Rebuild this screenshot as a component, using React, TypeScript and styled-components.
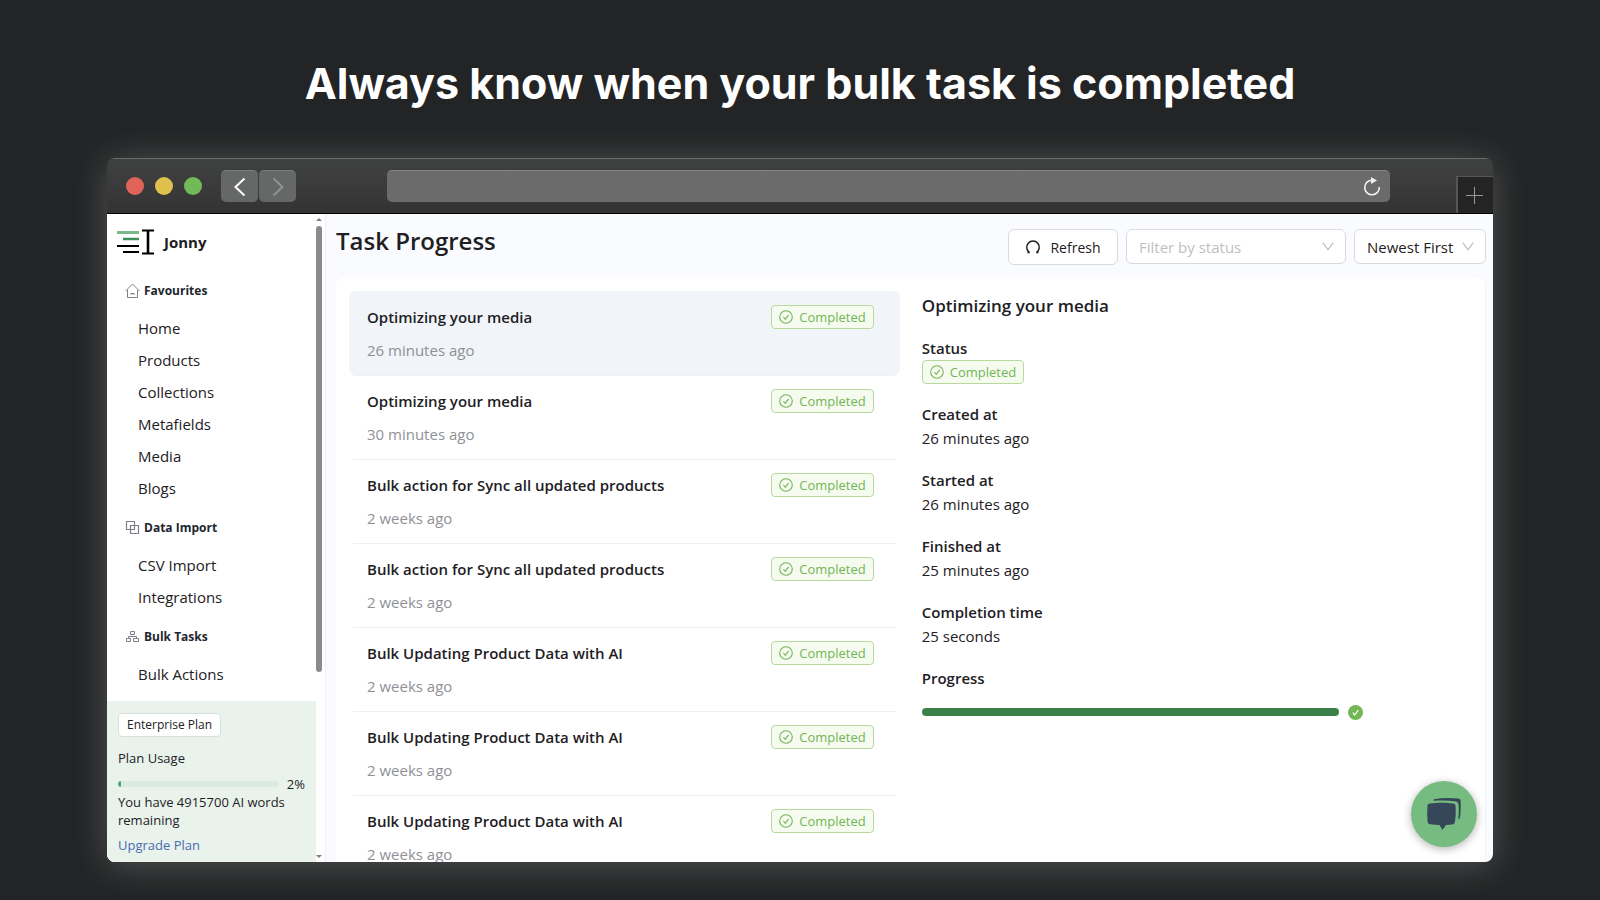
import React from "react";
import styled, { createGlobalStyle } from "styled-components";

const GlobalStyle = createGlobalStyle`
  *, *::before, *::after { box-sizing: border-box; }
  body { margin: 0; background: #232425; }
  body, button, select { font-family: "Open Sans", "Noto Sans", sans-serif; font-size: 15px; color: #1e2024; }
  h1, h2, h3, p, ul, dl, dd { margin: 0; padding: 0; }
  ul { list-style: none; }
  a { text-decoration: none; }
  button { cursor: pointer; }
`;

const Page = styled.div`
  display: flex;
  flex-direction: column;
  height: 100vh;
  padding: 0 107px 38px;
  background: #232425;
`;

const Headline = styled.h1`
  flex: none;
  height: 158px;
  padding-top: 57px;
  font-family: Inter, sans-serif;
  font-size: 43px;
  font-weight: 700;
  line-height: 52px;
  text-align: center;
  white-space: nowrap;
  color: #fff;
`;

const Browser = styled.div`
  position: relative;
  flex: 1;
  min-height: 0;
  display: flex;
  flex-direction: column;
  border-radius: 8px;
  overflow: hidden;
  box-shadow: 0 3px 36px 0 rgba(255, 255, 255, 0.22);
`;

const Chrome = styled.header`
  flex: none;
  display: flex;
  align-items: center;
  height: 56px;
  padding-left: 19px;
  background: linear-gradient(#404241, #333333);
  border-top: 1px solid #6a6c6b;
  border-bottom: 1px solid #000;
`;

const Lights = styled.div`
  display: flex;
  gap: 11px;
`;

const Light = styled.span<{ $color: string }>`
  width: 18px;
  height: 18px;
  border-radius: 50%;
  background: ${(p) => p.$color};
`;

const NavButtons = styled.div`
  display: flex;
  gap: 1px;
  margin-left: 19px;
`;

const NavButton = styled.button`
  display: grid;
  place-items: center;
  width: 37px;
  height: 32px;
  padding: 0;
  border: 0;
  border-top: 1px solid #7b7d7c;
  border-radius: 5px;
  background: #666867;
`;

const AddressBar = styled.div`
  flex: 1;
  display: flex;
  align-items: center;
  justify-content: flex-end;
  height: 32px;
  margin: 0 66px 0 91px;
  padding-right: 9px;
  border-top: 1px solid #828282;
  border-radius: 5px;
  background: #6b6b6b;
`;

const BareButton = styled.button`
  display: grid;
  place-items: center;
  padding: 0;
  border: 0;
  background: none;
`;

const NewTab = styled.button`
  align-self: flex-end;
  display: grid;
  place-items: center;
  width: 37px;
  height: 37px;
  padding: 0 2px 0 0;
  border: 0;
  border-left: 2px solid #565656;
  border-top: 1px solid #565656;
  background: #242424;
`;

const Content = styled.div`
  flex: 1;
  min-height: 0;
  display: flex;
  background: #fafbfe;
`;

const Sidebar = styled.aside`
  flex: none;
  display: flex;
  width: 219px;
  background: #fff;
  border-right: 1px solid #eef0f3;
`;

const SidebarColumn = styled.div`
  flex: 1;
  display: flex;
  flex-direction: column;
`;

const Scrollbar = styled.div`
  display: flex;
  flex-direction: column;
  align-items: center;
  justify-content: space-between;
  width: 9px;
  padding: 4px 3px 4px 0;
`;

const Thumb = styled.div`
  width: 6px;
  height: 446px;
  margin-top: 5px;
  margin-bottom: auto;
  border-radius: 3px;
  background: #8b8b8b;
`;

const Brand = styled.div`
  display: flex;
  align-items: center;
  gap: 10px;
  height: 56px;
  padding-left: 10px;
  font-weight: 700;
`;

const Nav = styled.nav`
  flex: 1;
  min-height: 0;
  overflow: hidden;
`;

const GroupTitle = styled.h3`
  display: flex;
  align-items: center;
  gap: 4px;
  height: 40px;
  padding-left: 18px;
  font-size: 12px;
  font-weight: 700;
  color: #22262e;
`;

const Item = styled.a`
  display: block;
  height: 32px;
  padding-left: 31px;
  line-height: 32px;
  color: #1e2024;
`;

const ItemList = styled.ul`
  padding: 2px 0 3px;
`;

const Plan = styled.section`
  flex: none;
  display: flex;
  flex-direction: column;
  align-items: flex-start;
  height: 161px;
  padding: 12px 11px 0;
  background: #e9f3ec;
  font-size: 13px;
  line-height: 18px;
`;

const PlanTag = styled.span`
  padding: 1px 8px;
  border: 1px solid #d9dfdb;
  border-radius: 4px;
  background: #fff;
  font-size: 12px;
  line-height: 20px;
`;

const PlanLabel = styled.p`
  margin: 12px 0 8px;
`;

const Usage = styled.div`
  display: flex;
  align-items: center;
  gap: 8px;
  width: 100%;
`;

const UsageTrack = styled.div`
  flex: 1;
  height: 6px;
  border-radius: 3px;
  background: #dcebe1;
  overflow: hidden;
`;

const UsageFill = styled.div`
  width: 2%;
  height: 100%;
  background: #55a873;
`;

const UpgradeLink = styled.a`
  margin-top: 7px;
  color: #4a6cb0;
`;

const Main = styled.main`
  flex: 1;
  min-width: 0;
  display: flex;
  flex-direction: column;
  padding: 0 7px 0 10px;
`;

const TopRow = styled.div`
  flex: none;
  display: flex;
  justify-content: space-between;
  height: 63px;
`;

const PageTitle = styled.h2`
  padding-top: 11px;
  font-size: 24px;
  font-weight: 600;
  line-height: 32px;
`;

const Controls = styled.div`
  display: flex;
  gap: 8px;
  padding-top: 15px;
`;

const RefreshButton = styled.button`
  display: flex;
  align-items: center;
  justify-content: center;
  gap: 9px;
  width: 110px;
  height: 36px;
  border: 1px solid #d9dadd;
  border-radius: 6px;
  background: #fff;
  font-size: 14px;
`;

const SelectWrap = styled.div<{ $width: number }>`
  display: grid;
  align-items: center;
  width: ${(p) => p.$width}px;
  height: 35px;

  > * { grid-area: 1 / 1; }
  > svg { justify-self: end; margin-right: 12px; pointer-events: none; }
`;

const Select = styled.select<{ $muted?: boolean }>`
  appearance: none;
  width: 100%;
  height: 100%;
  padding: 0 12px;
  border: 1px solid #d9dadd;
  border-radius: 6px;
  background: #fff;
  color: ${(p) => (p.$muted ? "#bfbfbf" : "#1e2024")};
`;

const Card = styled.div`
  flex: 1;
  min-height: 0;
  display: flex;
  gap: 22px;
  padding: 14px 12px 0 13px;
  border-right: 1px solid #f0f2f5;
  border-radius: 8px 8px 0 0;
  background: #fff;
  overflow: hidden;
`;

const TaskList = styled.ul`
  flex: 0 0 49%;
`;

const Task = styled.button<{ $active?: boolean }>`
  display: flex;
  justify-content: space-between;
  align-items: flex-start;
  width: 100%;
  height: 84px;
  padding: 14px 26px 0 18px;
  border: 0;
  border-radius: 6px;
  background: ${(p) =>
    p.$active
      ? "#f1f4f9"
      : "linear-gradient(#eef0f2, #eef0f2) center top / calc(100% - 6px) 1px no-repeat"};
  text-align: left;
`;

const TaskTitle = styled.span`
  display: block;
  font-weight: 600;
  line-height: 24px;
`;

const TaskTime = styled.span`
  display: block;
  margin-top: 9px;
  line-height: 24px;
  color: #8f9196;
`;

const Tag = styled.span`
  display: inline-flex;
  align-items: center;
  gap: 6px;
  height: 24px;
  padding: 0 7px;
  border: 1px solid #b9d99c;
  border-radius: 4px;
  background: #f6fbf0;
  font-size: 13px;
  color: #72b556;
`;

const Detail = styled.section`
  flex: 1;
`;

const DetailTitle = styled.h3`
  height: 45px;
  font-size: 17px;
  font-weight: 600;
  line-height: 30px;
`;

const Field = styled.div`
  height: 66px;
  line-height: 24px;

  dt { font-weight: 600; }
  dd { display: flex; }
`;

const Progress = styled.div`
  display: flex;
  align-items: center;
  gap: 9px;
  width: 80%;
  height: 44px;
`;

const ProgressBar = styled.div`
  flex: 1;
  height: 8px;
  border-radius: 4px;
  background: #3b8048;
`;

const ChatButton = styled.button`
  position: absolute;
  right: 16px;
  bottom: 15px;
  display: grid;
  place-items: center;
  width: 66px;
  height: 66px;
  padding: 0;
  border: 0;
  border-radius: 50%;
  background: #76bb7f;
  box-shadow: 0 2px 8px rgba(0, 0, 0, 0.3);
`;

const Logo = () => (
  <svg width="37" height="26" viewBox="0 0 37 26" fill="none" aria-hidden="true">
    <path d="M0 3.500h22" stroke="#7ab98a" strokeWidth="3" />
    <path d="M6 10h16" stroke="#3f8f5a" strokeWidth="2.400" />
    <path d="M0 17h22M6 23h16" stroke="#000" strokeWidth="2" />
    <path d="M25 1.500h12M25 24.500h12" stroke="#000" strokeWidth="2" />
    <path d="M31 2v22" stroke="#000" strokeWidth="2.600" />
  </svg>
);

const HomeIcon = () => (
  <svg width="15" height="15" viewBox="0 0 15 15" fill="none" stroke="#7c808a" aria-hidden="true">
    <path d="M.5 8 7.500 1l7 7M2.500 7v7.500h10V7" />
    <path d="M6 12v-1.500h3V12" />
  </svg>
);

const BlocksIcon = () => (
  <svg width="15" height="15" viewBox="0 0 15 15" fill="none" stroke="#7c808a" strokeWidth="1.200" aria-hidden="true">
    <path d="M5 9.500H1.500v-8h8V5" />
    <path d="M5.500 5.500h8v8h-8zM9.500 5.500v4h-4" />
  </svg>
);

const ClusterIcon = () => (
  <svg width="15" height="15" viewBox="0 0 15 15" fill="none" stroke="#7c808a" aria-hidden="true">
    <path d="M5.500 2.500h4v3h-4zM1.500 9.500h4v3h-4zM8.500 9.500h5v3h-5zM3.500 9V7.500h8V9" />
  </svg>
);

const CheckIcon = () => (
  <svg width="14" height="14" viewBox="0 0 14 14" fill="none" stroke="currentColor" strokeWidth="1.100" aria-hidden="true">
    <circle cx="7" cy="7" r="6.300" />
    <path d="m4.400 7 1.900 2.300 3.300-4.500" />
  </svg>
);

const DoneIcon = () => (
  <svg width="15" height="15" viewBox="0 0 15 15" fill="none" aria-hidden="true">
    <circle cx="7.500" cy="7.500" r="7.500" fill="#73b756" />
    <path d="m4.800 7.600 1.900 2.400 3.500-4.800" stroke="#fff" strokeWidth="1.200" />
  </svg>
);

const Chevron = () => (
  <svg width="12" height="12" viewBox="0 0 12 12" fill="none" stroke="#bfbfbf" strokeWidth="1.200" aria-hidden="true">
    <path d="m.8 1.700 5.200 7 5.200-7" />
  </svg>
);

const SpinIcon = () => (
  <svg width="16" height="16" viewBox="0 0 16 16" fill="none" stroke="#1e2024" strokeWidth="1.500" aria-hidden="true">
    <path d="M4.600 13.600A6.300 6.300 0 1 1 11.400 13.600M2.500 13.600h2.300M11.200 13.600h2.300" />
  </svg>
);

const Arrow = ({ up }: { up?: boolean }) => (
  <svg width="6" height="3" viewBox="0 0 6 3" fill="#808080" aria-hidden="true">
    <path d={up ? "M0 3 3 0l3 3z" : "M0 0h6L3 3z"} />
  </svg>
);

const groups = [
  { title: "Favourites", icon: <HomeIcon />, items: ["Home", "Products", "Collections", "Metafields", "Media", "Blogs"] },
  { title: "Data Import", icon: <BlocksIcon />, items: ["CSV Import", "Integrations"] },
  { title: "Bulk Tasks", icon: <ClusterIcon />, items: ["Bulk Actions"] },
];

const tasks = [
  { title: "Optimizing your media", time: "26 minutes ago" },
  { title: "Optimizing your media", time: "30 minutes ago" },
  { title: "Bulk action for Sync all updated products", time: "2 weeks ago" },
  { title: "Bulk action for Sync all updated products", time: "2 weeks ago" },
  { title: "Bulk Updating Product Data with AI", time: "2 weeks ago" },
  { title: "Bulk Updating Product Data with AI", time: "2 weeks ago" },
  { title: "Bulk Updating Product Data with AI", time: "2 weeks ago" },
];

const fields = [
  { label: "Created at", value: "26 minutes ago" },
  { label: "Started at", value: "26 minutes ago" },
  { label: "Finished at", value: "25 minutes ago" },
  { label: "Completion time", value: "25 seconds" },
];

const Completed = () => (
  <Tag>
    <CheckIcon />
    Completed
  </Tag>
);

export default function App() {
  return (
    <Page>
      <GlobalStyle />
      <Headline>Always know when your bulk task is completed</Headline>
      <Browser>
        <Chrome>
          <Lights>
            <Light $color="#e0635a" />
            <Light $color="#e0c04c" />
            <Light $color="#72ba57" />
          </Lights>
          <NavButtons>
            <NavButton aria-label="Back">
              <svg width="12" height="20" viewBox="0 0 12 20" fill="none" stroke="#fff" strokeWidth="2">
                <path d="m10.500 1.500-9 8.500 9 8.500" />
              </svg>
            </NavButton>
            <NavButton aria-label="Forward">
              <svg width="12" height="20" viewBox="0 0 12 20" fill="none" stroke="#929292" strokeWidth="2">
                <path d="m1.500 1.500 9 8.500-9 8.500" />
              </svg>
            </NavButton>
          </NavButtons>
          <AddressBar>
            <BareButton aria-label="Reload">
              <svg width="18" height="20" viewBox="0 0 18 20" fill="none">
                <path d="M9 3.200A7.300 7.300 0 1 0 16.300 10" stroke="#efefef" strokeWidth="1.600" />
                <path d="M8 0v7l6-3.500z" fill="#efefef" />
              </svg>
            </BareButton>
          </AddressBar>
          <NewTab aria-label="New tab">
            <svg width="17" height="17" viewBox="0 0 17 17" stroke="#9a9a9a">
              <path d="M8.500 0v17M0 8.500h17" />
            </svg>
          </NewTab>
        </Chrome>
        <Content>
          <Sidebar>
            <SidebarColumn>
              <Brand>
                <Logo />
                Jonny
              </Brand>
              <Nav>
                {groups.map((group) => (
                  <React.Fragment key={group.title}>
                    <GroupTitle>
                      {group.icon}
                      {group.title}
                    </GroupTitle>
                    <ItemList>
                      {group.items.map((item) => (
                        <li key={item}>
                          <Item href="#">{item}</Item>
                        </li>
                      ))}
                    </ItemList>
                  </React.Fragment>
                ))}
              </Nav>
              <Plan>
                <PlanTag>Enterprise Plan</PlanTag>
                <PlanLabel>Plan Usage</PlanLabel>
                <Usage>
                  <UsageTrack>
                    <UsageFill />
                  </UsageTrack>
                  2%
                </Usage>
                <p>You have 4915700 AI words remaining</p>
                <UpgradeLink href="#">Upgrade Plan</UpgradeLink>
              </Plan>
            </SidebarColumn>
            <Scrollbar>
              <Arrow up />
              <Thumb />
              <Arrow />
            </Scrollbar>
          </Sidebar>
          <Main>
            <TopRow>
              <PageTitle>Task Progress</PageTitle>
              <Controls>
                <RefreshButton>
                  <SpinIcon />
                  Refresh
                </RefreshButton>
                <SelectWrap $width={220}>
                  <Select $muted aria-label="Filter by status">
                    <option>Filter by status</option>
                  </Select>
                  <Chevron />
                </SelectWrap>
                <SelectWrap $width={132}>
                  <Select aria-label="Sort order">
                    <option>Newest First</option>
                  </Select>
                  <Chevron />
                </SelectWrap>
              </Controls>
            </TopRow>
            <Card>
              <TaskList>
                {tasks.map((task, i) => (
                  <li key={i}>
                    <Task $active={i === 0}>
                      <span>
                        <TaskTitle>{task.title}</TaskTitle>
                        <TaskTime>{task.time}</TaskTime>
                      </span>
                      <Completed />
                    </Task>
                  </li>
                ))}
              </TaskList>
              <Detail>
                <DetailTitle>Optimizing your media</DetailTitle>
                <dl>
                  <Field>
                    <dt>Status</dt>
                    <dd>
                      <Completed />
                    </dd>
                  </Field>
                  {fields.map((field) => (
                    <Field key={field.label}>
                      <dt>{field.label}</dt>
                      <dd>{field.value}</dd>
                    </Field>
                  ))}
                  <Field>
                    <dt>Progress</dt>
                    <dd>
                      <Progress>
                        <ProgressBar />
                        <DoneIcon />
                      </Progress>
                    </dd>
                  </Field>
                </dl>
              </Detail>
            </Card>
          </Main>
        </Content>
        <ChatButton aria-label="Open chat">
          <svg width="34" height="34" viewBox="0 0 34 34" fill="#37475a" aria-hidden="true">
            <path d="M3 6.500c7-1 17-1 23 0 2 .3 2.500 1 2.600 3 .3 5 .2 10-.6 15-.3 2-1 2.700-3 3-2 .3-4 .5-6 .6L15.500 33 12.500 28c-3-.1-6-.3-9-.8C1.500 27 .6 26 .5 24 .1 19 .1 14 .5 9c.1-1.500.8-2.300 2.500-2.500z" />
            <path d="M7 2.200C15 .8 23 .8 31 1.600c2 .2 2.600 1 2.700 3 .2 6 0 11-.7 16-.2 1-.8 1.400-1.800 1.600.6-5 .8-10 .4-14-.2-2.500-1.200-3.600-3.600-3.900-7-1-14-1-21.500-.5 0-.8 0-1.400.5-1.600z" />
          </svg>
        </ChatButton>
      </Browser>
    </Page>
  );
}
